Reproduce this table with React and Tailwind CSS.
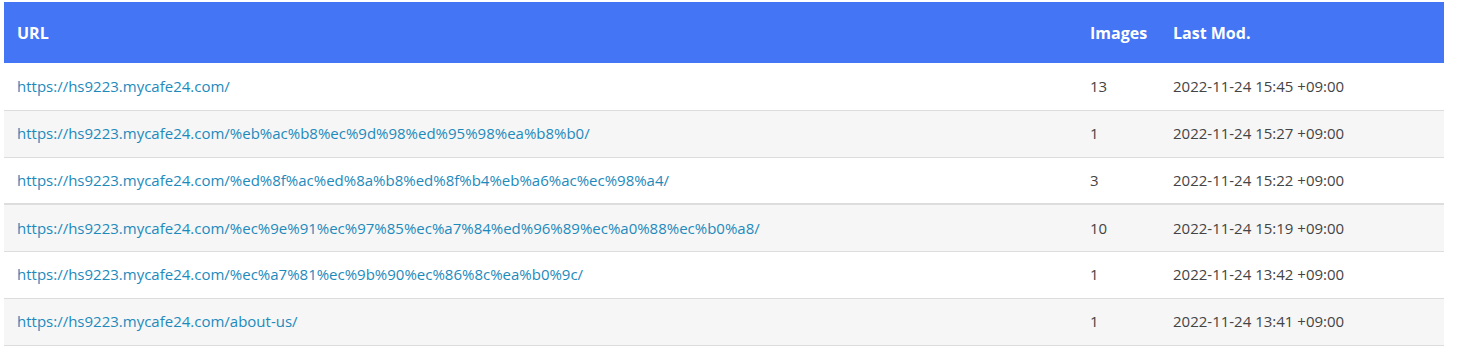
const rows = [
  { url: 'https://hs9223.mycafe24.com/', images: 13, mod: '2022-11-24 15:45 +09:00' },
  { url: 'https://hs9223.mycafe24.com/%eb%ac%b8%ec%9d%98%ed%95%98%ea%b8%b0/', images: 1, mod: '2022-11-24 15:27 +09:00' },
  { url: 'https://hs9223.mycafe24.com/%ed%8f%ac%ed%8a%b8%ed%8f%b4%eb%a6%ac%ec%98%a4/', images: 3, mod: '2022-11-24 15:22 +09:00' },
  { url: 'https://hs9223.mycafe24.com/%ec%9e%91%ec%97%85%ec%a7%84%ed%96%89%ec%a0%88%ec%b0%a8/', images: 10, mod: '2022-11-24 15:19 +09:00' },
  { url: 'https://hs9223.mycafe24.com/%ec%a7%81%ec%9b%90%ec%86%8c%ea%b0%9c/', images: 1, mod: '2022-11-24 13:42 +09:00' },
  { url: 'https://hs9223.mycafe24.com/about-us/', images: 1, mod: '2022-11-24 13:41 +09:00' },
];

export default function App() {
  return (
    <div className="min-h-screen bg-white pt-[2px] pl-[4px] pr-[15px] font-['Open_Sans',sans-serif]">
      <table className="w-[1440px] border-collapse text-left">
        <thead>
          <tr className="bg-[#4475f4] text-white">
            <th className="h-[61px] pl-[13px] text-[16px] font-bold">URL</th>
            <th className="h-[61px] w-[84px] pl-[13px] text-[16px] font-bold">Images</th>
            <th className="h-[61px] w-[283px] pl-[12px] text-[16px] font-bold">Last Mod.</th>
          </tr>
        </thead>
        <tbody>
          {rows.map((r, i) => (
            <tr
              key={i}
              className={`${i % 2 === 1 ? 'bg-[#f6f6f6]' : 'bg-white'} ${i === 3 ? 'border-t-2' : ''} border-b border-[#dddddd]`}
            >
              <td className="h-[47px] pl-[13px] text-[15px]">
                <a href={r.url} className="text-[#1d8abc]">{r.url}</a>
              </td>
              <td className="h-[47px] pl-[13px] text-[15px] text-[#444444]">{r.images}</td>
              <td className="h-[47px] pl-[12px] text-[15px] text-[#444444]">{r.mod}</td>
            </tr>
          ))}
        </tbody>
      </table>
    </div>
  );
}
